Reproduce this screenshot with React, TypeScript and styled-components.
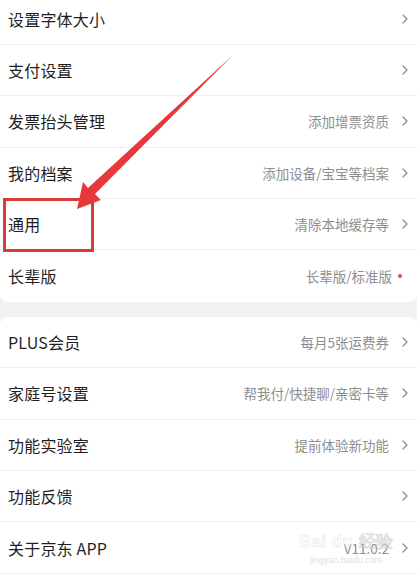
import React from "react";
import styled, { createGlobalStyle } from "styled-components";

const GlobalStyle = createGlobalStyle`
  html, body { margin: 0; padding: 0; background: #f2f2f2; }
  body { font-family: "Noto Sans CJK SC", "Noto Sans", sans-serif; }
  * { box-sizing: border-box; }
`;

const Screen = styled.div`
  position: relative;
  width: 417px;
  height: 584px;
  overflow: hidden;
  background: #f2f2f2;
`;

const Stack = styled.div`
  display: flex;
  flex-direction: column;
  gap: 15px;
  margin-top: -6.5px;
`;

const Card = styled.div`
  background: #ffffff;
  border-radius: 8px;
  display: flex;
  flex-direction: column;
`;

const Row = styled.div`
  height: 51.4px;
  display: flex;
  align-items: center;
  padding: 0 8px 0 8px;
  border-bottom: 1px solid #efefef;
  &:last-child { border-bottom: none; }
`;

const Label = styled.span`
  flex: 1;
  font-size: 16px;
  color: #1f1f1f;
  letter-spacing: 0.2px;
`;

const Hint = styled.span<{ $tight?: boolean }>`
  font-size: 13.5px;
  color: #8e8e8e;
  margin-right: ${(p) => (p.$tight ? "6px" : "12px")};
`;

const Dot = styled.span`
  width: 4px;
  height: 4px;
  border-radius: 50%;
  background: #e04a45;
  margin-right: 7px;
`;

const Chevron = styled.svg`
  width: 8px;
  height: 10px;
  flex: none;
`;

const Overlay = styled.svg`
  position: absolute;
  left: 0;
  top: 0;
  pointer-events: none;
`;

const Highlight = styled.div`
  position: absolute;
  left: 3px;
  top: 198px;
  width: 91px;
  height: 54px;
  border: 3px solid #d93a3a;
`;

const Watermark = styled.div`
  position: absolute;
  left: 298px;
  top: 532px;
  width: 96px;
  display: flex;
  flex-direction: column;
  align-items: center;
  pointer-events: none;
  white-space: nowrap;
`;

const WmLogo = styled.span`
  font-family: "Liberation Sans", sans-serif;
  font-size: 17px;
  line-height: 20px;
  font-weight: bold;
  letter-spacing: 0.5px;
  color: rgba(255, 255, 255, 0.4);
  -webkit-text-stroke: 0.5px rgba(200, 200, 200, 0.55);
`;

const WmUrl = styled.span`
  font-family: "Liberation Sans", sans-serif;
  font-size: 9px;
  line-height: 12px;
  margin-top: 2px;
  color: rgba(200, 200, 200, 0.6);
`;

type Item = { label: string; hint?: string; dot?: boolean };

const group1: Item[] = [
  { label: "设置字体大小" },
  { label: "支付设置" },
  { label: "发票抬头管理", hint: "添加增票资质" },
  { label: "我的档案", hint: "添加设备/宝宝等档案" },
  { label: "通用", hint: "清除本地缓存等" },
  { label: "长辈版", hint: "长辈版/标准版", dot: true },
];

const group2: Item[] = [
  { label: "PLUS会员", hint: "每月5张运费券" },
  { label: "家庭号设置", hint: "帮我付/快捷聊/亲密卡等" },
  { label: "功能实验室", hint: "提前体验新功能" },
  { label: "功能反馈" },
  { label: "关于京东 APP", hint: "V11.0.2" },
  { label: "" },
];

const Arrow = () => (
  <Chevron viewBox="0 0 8 10">
    <polyline points="2,1 6,5 2,9" fill="none" stroke="#8a8a8a" strokeWidth="1.2" strokeLinecap="round" strokeLinejoin="round" />
  </Chevron>
);

const SettingRow = ({ item }: { item: Item }) => (
  <Row>
    <Label>{item.label}</Label>
    {item.hint && <Hint $tight={item.dot}>{item.hint}</Hint>}
    {item.dot ? <Dot /> : item.label ? <Arrow /> : null}
  </Row>
);

export default function App() {
  return (
    <>
      <GlobalStyle />
      <Screen>
        <Stack>
          <Card>
            {group1.map((it) => (
              <SettingRow key={it.label} item={it} />
            ))}
          </Card>
          <Card>
            {group2.map((it, i) => (
              <SettingRow key={i} item={it} />
            ))}
          </Card>
        </Stack>
        <Highlight />
        <Overlay width="417" height="584" viewBox="0 0 417 584">
          <polygon
            points="233,55 95,194 101,200 77,209 83,182 88,188"
            fill="#e8383b"
          />
        </Overlay>
        <Watermark>
          <WmLogo>Bai du 经验</WmLogo>
          <WmUrl>jingyan.baidu.com</WmUrl>
        </Watermark>
      </Screen>
    </>
  );
}
